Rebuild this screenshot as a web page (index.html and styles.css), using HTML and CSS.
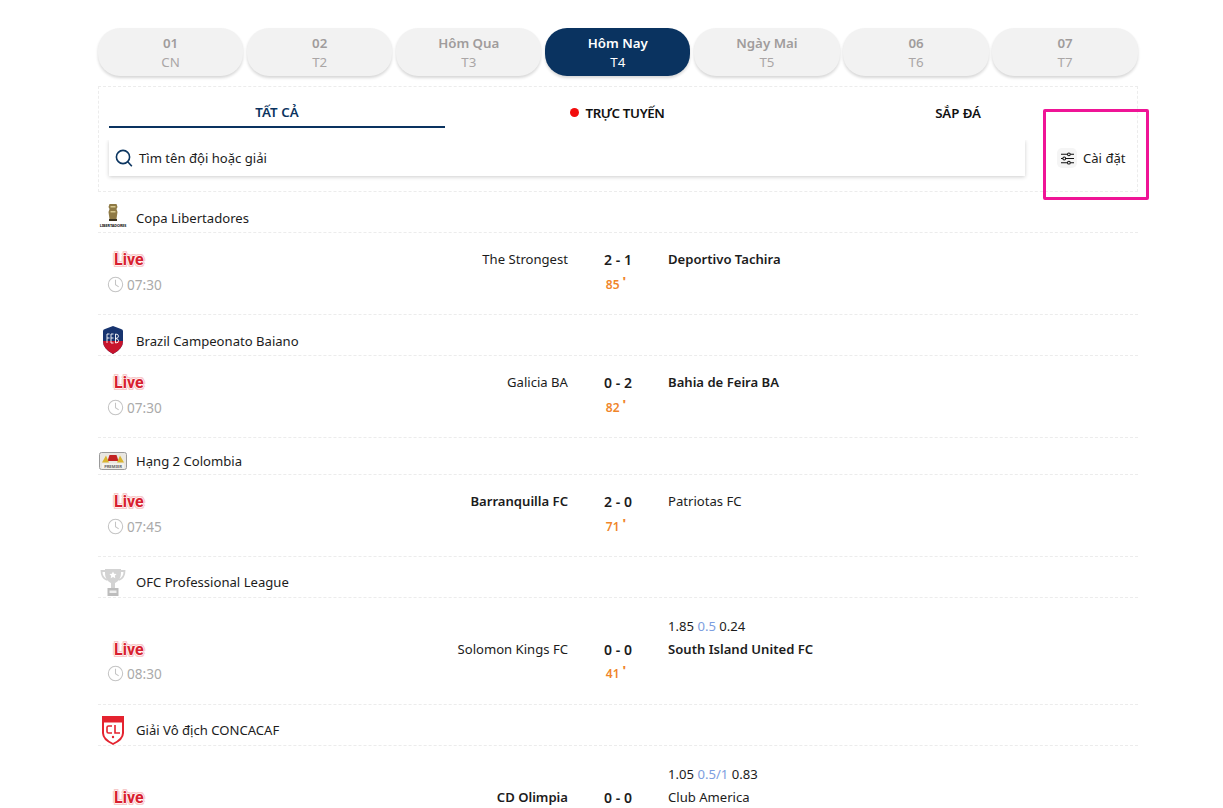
FILE: index.html
```html
<!DOCTYPE html>
<html lang="vi">
<head>
<meta charset="utf-8">
<title>Lịch thi đấu</title>
<link rel="stylesheet" href="styles.css">
</head>
<body>
<svg class="defs" width="0" height="0" aria-hidden="true">
  <symbol id="clock" viewBox="0 0 18 18"><circle cx="9" cy="9" r="7.6" fill="none" stroke="#c4c4c4" stroke-width="1.1"/><path d="M9 4v5.3l3.4 2.2" fill="none" stroke="#c4c4c4" stroke-width="1.1"/></symbol>
</svg>
<main class="page">
  <nav class="dates">
    <a class="pill"><b>01</b><span>CN</span></a>
    <a class="pill"><b>02</b><span>T2</span></a>
    <a class="pill"><b>Hôm Qua</b><span>T3</span></a>
    <a class="pill active"><b>Hôm Nay</b><span>T4</span></a>
    <a class="pill"><b>Ngày Mai</b><span>T5</span></a>
    <a class="pill"><b>06</b><span>T6</span></a>
    <a class="pill"><b>07</b><span>T7</span></a>
  </nav>

  <section class="panel">
    <div class="tabs">
      <a class="tab current">TẤT CẢ</a>
      <a class="tab tab-live"><i class="dot"></i>TRỰC TUYẾN</a>
      <a class="tab">SẮP ĐÁ</a>
    </div>
    <div class="tools">
      <div class="search">
        <svg class="search-icon" viewBox="0 0 18 18"><circle cx="8" cy="8" r="6.6" fill="none" stroke="#0b3560" stroke-width="1.6"/><path d="M12.8 12.8l4 4.4" fill="none" stroke="#0b3560" stroke-width="1.6"/></svg>
        <span>Tìm tên đội hoặc giải</span>
      </div>
      <div class="settings">
        <span class="settings-icon"><svg viewBox="0 0 16 14" width="15" height="13"><g fill="none" stroke="#111" stroke-width="1.100"><path d="M1 2.500h7M11 2.500h4M1 7h2M6 7h9M1 11.500h7M11 11.500h4"/><circle cx="9.500" cy="2.500" r="1.500"/><circle cx="4.500" cy="7" r="1.500"/><circle cx="9.500" cy="11.500" r="1.500"/></g></svg></span>
        <span>Cài đặt</span>
      </div>
    </div>
    <div class="highlight"></div>
  </section>

  <section>
    <header class="league pad-5">
      <svg class="logo logo-copa" viewBox="0 0 30 25"><path d="M11.500 1h7l1 3-1 2 1 3-1 7h-7l-1-7 1-3-1-2z" fill="#8f7a45"/><path d="M12.500 3h5v1.500h-5zM12.500 8h5v1.500h-5z" fill="#d8c78e"/><rect x="11" y="16" width="8" height="2" fill="#3a3320"/><text x="15" y="24" text-anchor="middle" class="logo-text">LIBERTADORES</text></svg>
      <span>Copa Libertadores</span>
    </header>
    <article class="match">
      <div class="line one"><span class="live">Live</span><span class="home">The Strongest</span><span class="score">2 - 1</span><strong class="away">Deportivo Tachira</strong></div>
      <div class="line two"><span class="time"><svg><use href="#clock"/></svg>07:30</span><span class="minute">85<i>'</i></span></div>
    </article>
  </section>

  <section>
    <header class="league pad-5">
      <svg class="logo logo-baiano" viewBox="0 0 22 28"><path d="M1 5Q1 3.500 3 3L11 0 19 3Q21 3.500 21 5V15Q21 23 11 28 1 23 1 15z" fill="#17346f"/><path d="M1 15H21Q21 23 11 28 1 23 1 15z" fill="#c8142c"/><g fill="none" stroke="#fff" stroke-width=".9"><path d="M5 17V8h2.500M5 12h2.500M9 17V8h2.500M9 12h2.500M9 17h2.500M13.500 8v9q3.500 0 3-2.500-.3-1.800-3-2 3-.2 3-2.300 0-2.200-3-2.200z"/></g></svg>
      <span>Brazil Campeonato Baiano</span>
    </header>
    <article class="match">
      <div class="line one"><span class="live">Live</span><span class="home">Galicia BA</span><span class="score">0 - 2</span><strong class="away">Bahia de Feira BA</strong></div>
      <div class="line two"><span class="time"><svg><use href="#clock"/></svg>07:30</span><span class="minute">82<i>'</i></span></div>
    </article>
  </section>

  <section>
    <header class="league short pad-4">
      <svg class="logo logo-premier" viewBox="0 0 28 18"><rect x=".5" y=".5" width="27" height="17" rx="2" fill="#e9e7e2" stroke="#9a9a9a"/><path d="M10.500 3h7l2 6h-11z" fill="#c22222"/><path d="M3 10.500l4-7 3 7zM25 10.500l-4-7-3 7z" fill="#d9b531"/><rect x="3" y="11.500" width="22" height="5" fill="#f5f3ee"/><text x="14" y="15.500" text-anchor="middle" class="logo-text dark">PREMIER</text></svg>
      <span>Hạng 2 Colombia</span>
    </header>
    <article class="match">
      <div class="line one"><span class="live">Live</span><strong class="home">Barranquilla FC</strong><span class="score">2 - 0</span><span class="away">Patriotas FC</span></div>
      <div class="line two"><span class="time"><svg><use href="#clock"/></svg>07:45</span><span class="minute">71<i>'</i></span></div>
    </article>
  </section>

  <section>
    <header class="league">
      <svg class="logo logo-trophy" viewBox="0 0 26 28"><path d="M5 1h16v4c0 6-3.500 9-6 10v5h-4v-5C8.500 14 5 11 5 5z" fill="#d3d3d3"/><path d="M5 3H1.500c0 5 3 8 5.500 9M21 3h3.500c0 5-3 8-5.500 9" fill="none" stroke="#d3d3d3" stroke-width="1.800"/><rect x="7.500" y="20" width="11" height="8" fill="#bdbdbd"/><rect x="9.500" y="22.500" width="7" height="2.500" fill="#eee"/><path d="M13 3.500l1.100 2.300 2.500.3-1.800 1.700.5 2.500-2.300-1.200-2.300 1.200.5-2.500-1.800-1.700 2.500-.3z" fill="#fff"/></svg>
      <span>OFC Professional League</span>
    </header>
    <article class="match">
      <div class="odds"><span>1.85</span> <em>0.5</em> <span>0.24</span></div>
      <div class="line one"><span class="live">Live</span><span class="home">Solomon Kings FC</span><span class="score">0 - 0</span><strong class="away">South Island United FC</strong></div>
      <div class="line two"><span class="time"><svg><use href="#clock"/></svg>08:30</span><span class="minute">41<i>'</i></span></div>
    </article>
  </section>

  <section>
    <header class="league">
      <svg class="logo logo-concacaf" viewBox="0 0 22 29"><path d="M0 0h22v17q0 7-11 12Q0 24 0 17z" fill="#e4232f"/><path d="M2 6.500h18v10.500q0 5.500-9 10Q2 22.500 2 17z" fill="#fff"/><g fill="none" stroke="#e4232f" stroke-width="1.600"><path d="M10 10H6.500Q5 10 5 11.500v4Q5 17 6.500 17H10"/><path d="M13 9v8h5"/></g><circle cx="11" cy="21" r="1.200" fill="#e4232f"/></svg>
      <span>Giải Vô địch CONCACAF</span>
    </header>
    <article class="match">
      <div class="odds"><span>1.05</span> <em>0.5/1</em> <span>0.83</span></div>
      <div class="line one"><span class="live">Live</span><strong class="home">CD Olimpia</strong><span class="score">0 - 0</span><span class="away">Club America</span></div>
    </article>
  </section>
</main>
</body>
</html>
```

FILE: styles.css
```css
* { box-sizing: border-box; }
html, body { margin: 0; height: 808px; overflow: hidden; background: #fff; }
body { font-family: "Noto Sans", "Open Sans", sans-serif; font-size: 13.100px; color: #1c1c1c; }
.defs { position: absolute; }
.page { width: 1040px; margin-left: 98px; padding-top: 28px; }

.dates { display: flex; gap: 3.900px; }
.pill { flex: none; width: 145.200px; height: 48px; border-radius: 22px; background: #f2f2f2; box-shadow: 0 2px 3px rgba(0,0,0,.16); display: flex; flex-direction: column; align-items: center; padding-top: 6px; color: #aaa6a6; line-height: 19px; font-size: 13.300px; }
.pill b { font-weight: 600; color: #a09c9c; }
.pill.active { background: #0a3360; color: #fff; }
.pill.active b { color: #fff; }

.panel { position: relative; margin-top: 10px; height: 106px; border: 1px dashed #ececec; padding: 0 10px; }
.tabs { display: flex; gap: 4.500px; width: 1017px; height: 41px; }
.tab { flex: 1; display: flex; align-items: center; justify-content: center; font-size: 13.300px; font-weight: 600; color: #111; padding-top: 10px; letter-spacing: -.1px; }
.tab.current { color: #0a3360; border-bottom: 2px solid #0a3360; letter-spacing: .1px; }
.tab-live { letter-spacing: -.35px; }
.dot { width: 9px; height: 9px; border-radius: 50%; background: #f20d0d; margin-right: 6px; }
.tools { display: flex; margin-top: 12px; }
.search { width: 916px; height: 36px; display: flex; align-items: center; gap: 6px; padding-left: 6px; box-shadow: 0 1px 4px rgba(0,0,0,.2); clip-path: inset(0 -6px -6px -6px); }
.search-icon { width: 18px; height: 18px; }
.settings { display: flex; align-items: center; gap: 6px; margin-left: 32px; }
.settings-icon { width: 20px; height: 20px; background: #f5f5f5; border-radius: 5px; display: flex; align-items: center; justify-content: center; }
.highlight { position: absolute; left: 944px; top: 22px; width: 106px; height: 91px; border: 3px solid #ef1496; border-radius: 2px; }

.league { display: flex; align-items: flex-end; height: 41px; border-bottom: 1px dashed #ececec; padding-bottom: 6px; line-height: 18px; position: relative; }
.short { height: 37px; }
.pad-5 { padding-bottom: 5px; }
.pad-4 { padding-bottom: 4px; }
.league span { margin-left: 38px; }
.logo { position: absolute; flex: none; }
.logo-copa { left: 0; top: 11px; width: 30px; height: 25px; }
.logo-baiano { left: 4px; top: 11px; width: 22px; height: 28px; }
.logo-premier { left: 1px; top: 14px; width: 28px; height: 18px; }
.logo-trophy { left: 2px; top: 11px; width: 26px; height: 28px; }
.logo-concacaf { left: 4px; top: 11px; width: 22px; height: 29px; }
.logo-text { font-size: 3.800px; font-weight: 700; fill: #111; letter-spacing: -.1px; }
.logo-text.dark { font-size: 4.200px; fill: #666; }

.match { padding: 14px 0 17px; border-bottom: 1px dashed #ececec; }
.odds { padding: 3px 0 0 570px; height: 25px; line-height: 22px; }
.odds em { font-style: normal; color: #7d9ee0; }
.line { display: grid; grid-template-columns: 70px 400px 100px 1fr; align-items: center; }
.one { height: 24px; }
.two { height: 26px; }
.odds ~ .two { margin-top: -1px; margin-bottom: 1px; }
.live { margin-left: 16px; width: 34px; font-family: Roboto, sans-serif; font-size: 16px; font-weight: 700; color: #d8202f; text-shadow: 1px 0 #fff0f0, -1px 0 #fff0f0, 0 1px #fff0f0, 0 -1px #fff0f0, 2px 0 #f7c9c9, -2px 0 #f7c9c9, 0 2px #f7c9c9, 0 -2px #f7c9c9, 1px 2px #f7c9c9, -1px -2px #f7c9c9, 1px -2px #f7c9c9, -1px 2px #f7c9c9; }
.home { text-align: right; grid-column: 2; }
.score { text-align: center; font-weight: 600; font-size: 14px; }
strong { font-weight: 600; }
.time { grid-column: 1; display: flex; align-items: center; gap: 3px; color: #aaa; margin-left: 9px; white-space: nowrap; font-size: 13.600px; }
.time svg { width: 17px; height: 17px; flex: none; }
.minute { grid-column: 3; text-align: center; color: #f0852a; font-size: 12px; font-weight: 600; padding-right: 4px; }
.minute i { font-style: normal; font-weight: 800; font-size: 13px; margin-left: 3px; position: relative; top: -3px; }
```
